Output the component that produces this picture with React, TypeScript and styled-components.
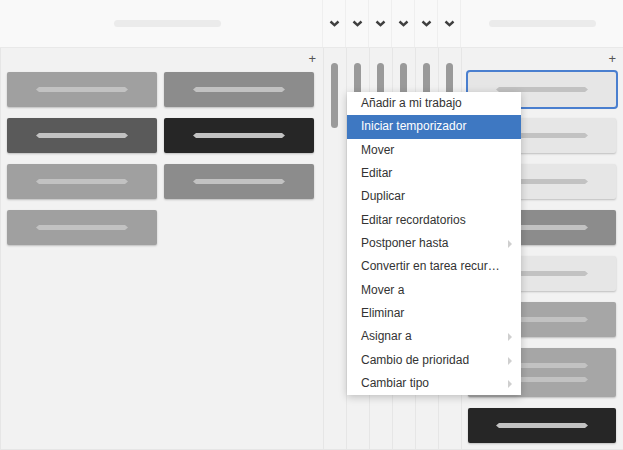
import styled, { createGlobalStyle } from "styled-components";

const GlobalStyle = createGlobalStyle`
  html, body {
    margin: 0;
    padding: 0;
    background: #f3f3f3;
  }
  * {
    box-sizing: border-box;
  }
`;

const COLS = "323px repeat(6, 23px) 1fr";

export const Board = styled.div`
  position: relative;
  width: 623px;
  height: 450px;
  display: grid;
  grid-template-rows: 48px 1fr;
  overflow: hidden;
  font-family: "Liberation Sans", Arial, sans-serif;
  background: #f3f3f3;
`;
Board.displayName = "Board";

export const Header = styled.div`
  display: grid;
  grid-template-columns: ${COLS};
  background: #f9f9f9;
  border-bottom: 1px solid #e9e9e9;
`;
Header.displayName = "Header";

export const HeadCell = styled.div<{ $last?: boolean }>`
  display: flex;
  align-items: center;
  justify-content: center;
  border-right: ${({ $last }) => ($last ? "none" : "1px solid #efefef")};
`;
HeadCell.displayName = "HeadCell";

export const TitlePill = styled.div<{ $shift?: number }>`
  width: 107px;
  height: 7px;
  border-radius: 4px;
  background: #ebebeb;
  margin-left: ${({ $shift }) => $shift ?? 0}px;
`;
TitlePill.displayName = "TitlePill";

export const Chevron = styled.svg<{ $up?: number }>`
  width: 11px;
  height: 7px;
  margin-top: ${({ $up }) => -($up ?? 0)}px;
`;
Chevron.displayName = "Chevron";

export const Body = styled.div`
  display: grid;
  grid-template-columns: ${COLS};
  border-left: 1px solid #e6e6e6;
  border-bottom: 1px solid #e6e6e6;
  min-height: 0;
`;
Body.displayName = "Body";

export const Column = styled.div<{ $last?: boolean }>`
  display: flex;
  flex-direction: column;
  padding: 2px 7px 0 6px;
  border-right: ${({ $last }) => ($last ? "none" : "1px solid #e6e6e6")};
  background: #f2f2f2;
`;
Column.displayName = "Column";

export const AddRow = styled.div`
  height: 16px;
  display: flex;
  align-items: center;
  justify-content: flex-end;
  color: #555;
  font-size: 13px;
  line-height: 1;
`;
AddRow.displayName = "AddRow";

export const CardGrid = styled.div`
  margin-top: 6px;
  display: grid;
  grid-template-columns: 150px 150px;
  column-gap: 7px;
  row-gap: 11px;
`;
CardGrid.displayName = "CardGrid";

export const CardStack = styled.div`
  margin-top: 6px;
  display: flex;
  flex-direction: column;
  gap: 11px;
`;
CardStack.displayName = "CardStack";

export const Card = styled.div<{ $bg: string; $tall?: boolean; $selected?: boolean }>`
  height: ${({ $tall }) => ($tall ? 49 : 35)}px;
  border-radius: 2px;
  background: ${({ $bg }) => $bg};
  display: flex;
  flex-direction: column;
  align-items: center;
  justify-content: center;
  gap: 9px;
  box-shadow: ${({ $selected }) =>
    $selected
      ? "0 0 0 2px #4a7fcf, 0 1px 2px rgba(0,0,0,0.2)"
      : "0 1px 2px rgba(0, 0, 0, 0.22)"};
`;
Card.displayName = "Card";

export const CardLine = styled.div`
  width: 92px;
  height: 5px;
  background: #c2c2c2;
  clip-path: polygon(3px 0, calc(100% - 3px) 0, 100% 50%, calc(100% - 3px) 100%, 3px 100%, 0 50%);
`;
CardLine.displayName = "CardLine";

export const Lane = styled.div`
  display: flex;
  justify-content: center;
  padding-top: 15px;
  padding-right: 2px;
  border-right: 1px solid #e6e6e6;
  background: #f2f2f2;
`;
Lane.displayName = "Lane";

export const LaneBar = styled.div`
  width: 7px;
  height: 65px;
  border-radius: 4px;
  background: #9a9a9a;
`;
LaneBar.displayName = "LaneBar";

export const Menu = styled.ul`
  position: absolute;
  left: 347px;
  top: 92px;
  width: 174px;
  margin: 0;
  padding: 0;
  list-style: none;
  background: #fff;
  box-shadow: 0 2px 8px rgba(0, 0, 0, 0.22);
  z-index: 5;
`;
Menu.displayName = "Menu";

export const MenuItem = styled.li<{ $active?: boolean }>`
  position: relative;
  height: 23.35px;
  line-height: 23.35px;
  padding: 0 20px 0 14px;
  font-size: 12px;
  color: ${({ $active }) => ($active ? "#fff" : "#333")};
  background: ${({ $active }) => ($active ? "#3e78c2" : "transparent")};
  white-space: nowrap;
  overflow: hidden;
  text-overflow: ellipsis;
`;
MenuItem.displayName = "MenuItem";

export const SubArrow = styled.span`
  position: absolute;
  right: 9px;
  top: 8px;
  width: 0;
  height: 0;
  border-top: 4px solid transparent;
  border-bottom: 4px solid transparent;
  border-left: 4px solid #cfcfcf;
`;
SubArrow.displayName = "SubArrow";

const leftCards = ["#a0a0a0", "#8c8c8c", "#5a5a5a", "#262626", "#a0a0a0", "#8c8c8c", "#a0a0a0"];

const rightCards: { bg: string; tall?: boolean; selected?: boolean }[] = [
  { bg: "#e6e6e6", selected: true },
  { bg: "#e6e6e6" },
  { bg: "#e6e6e6" },
  { bg: "#8c8c8c" },
  { bg: "#e6e6e6" },
  { bg: "#a6a6a6" },
  { bg: "#a6a6a6", tall: true },
  { bg: "#262626" },
];

const chevronLift = [0, 0, 0, 1, 0, 0];

const menuItems: { label: string; sub?: boolean; active?: boolean }[] = [
  { label: "Añadir a mi trabajo" },
  { label: "Iniciar temporizador", active: true },
  { label: "Mover" },
  { label: "Editar" },
  { label: "Duplicar" },
  { label: "Editar recordatorios" },
  { label: "Postponer hasta", sub: true },
  { label: "Convertir en tarea recurrente" },
  { label: "Mover a" },
  { label: "Eliminar" },
  { label: "Asignar a", sub: true },
  { label: "Cambio de prioridad", sub: true },
  { label: "Cambiar tipo", sub: true },
];

export default function App() {
  return (
    <>
      <GlobalStyle />
      <Board>
        <Header>
          <HeadCell>
            <TitlePill $shift={12} />
          </HeadCell>
          {chevronLift.map((up, i) => (
            <HeadCell key={i}>
              <Chevron $up={up} viewBox="0 0 11 7">
                <path d="M1.5 1.5 L5.5 5.2 L9.5 1.5" fill="none" stroke="#3f3f3f" strokeWidth="2.4" />
              </Chevron>
            </HeadCell>
          ))}
          <HeadCell $last>
            <TitlePill />
          </HeadCell>
        </Header>

        <Body>
          <Column>
            <AddRow>+</AddRow>
            <CardGrid>
              {leftCards.map((bg, i) => (
                <Card key={i} $bg={bg}>
                  <CardLine />
                </Card>
              ))}
            </CardGrid>
          </Column>
          {chevronLift.map((_, i) => (
            <Lane key={i}>
              <LaneBar />
            </Lane>
          ))}
          <Column $last>
            <AddRow>+</AddRow>
            <CardStack>
              {rightCards.map((c, i) => (
                <Card key={i} $bg={c.bg} $tall={c.tall} $selected={c.selected}>
                  <CardLine />
                  {c.tall && <CardLine />}
                </Card>
              ))}
            </CardStack>
          </Column>
        </Body>

        <Menu>
          {menuItems.map((m) => (
            <MenuItem key={m.label} $active={m.active}>
              {m.label}
              {m.sub && <SubArrow />}
            </MenuItem>
          ))}
        </Menu>
      </Board>
    </>
  );
}
